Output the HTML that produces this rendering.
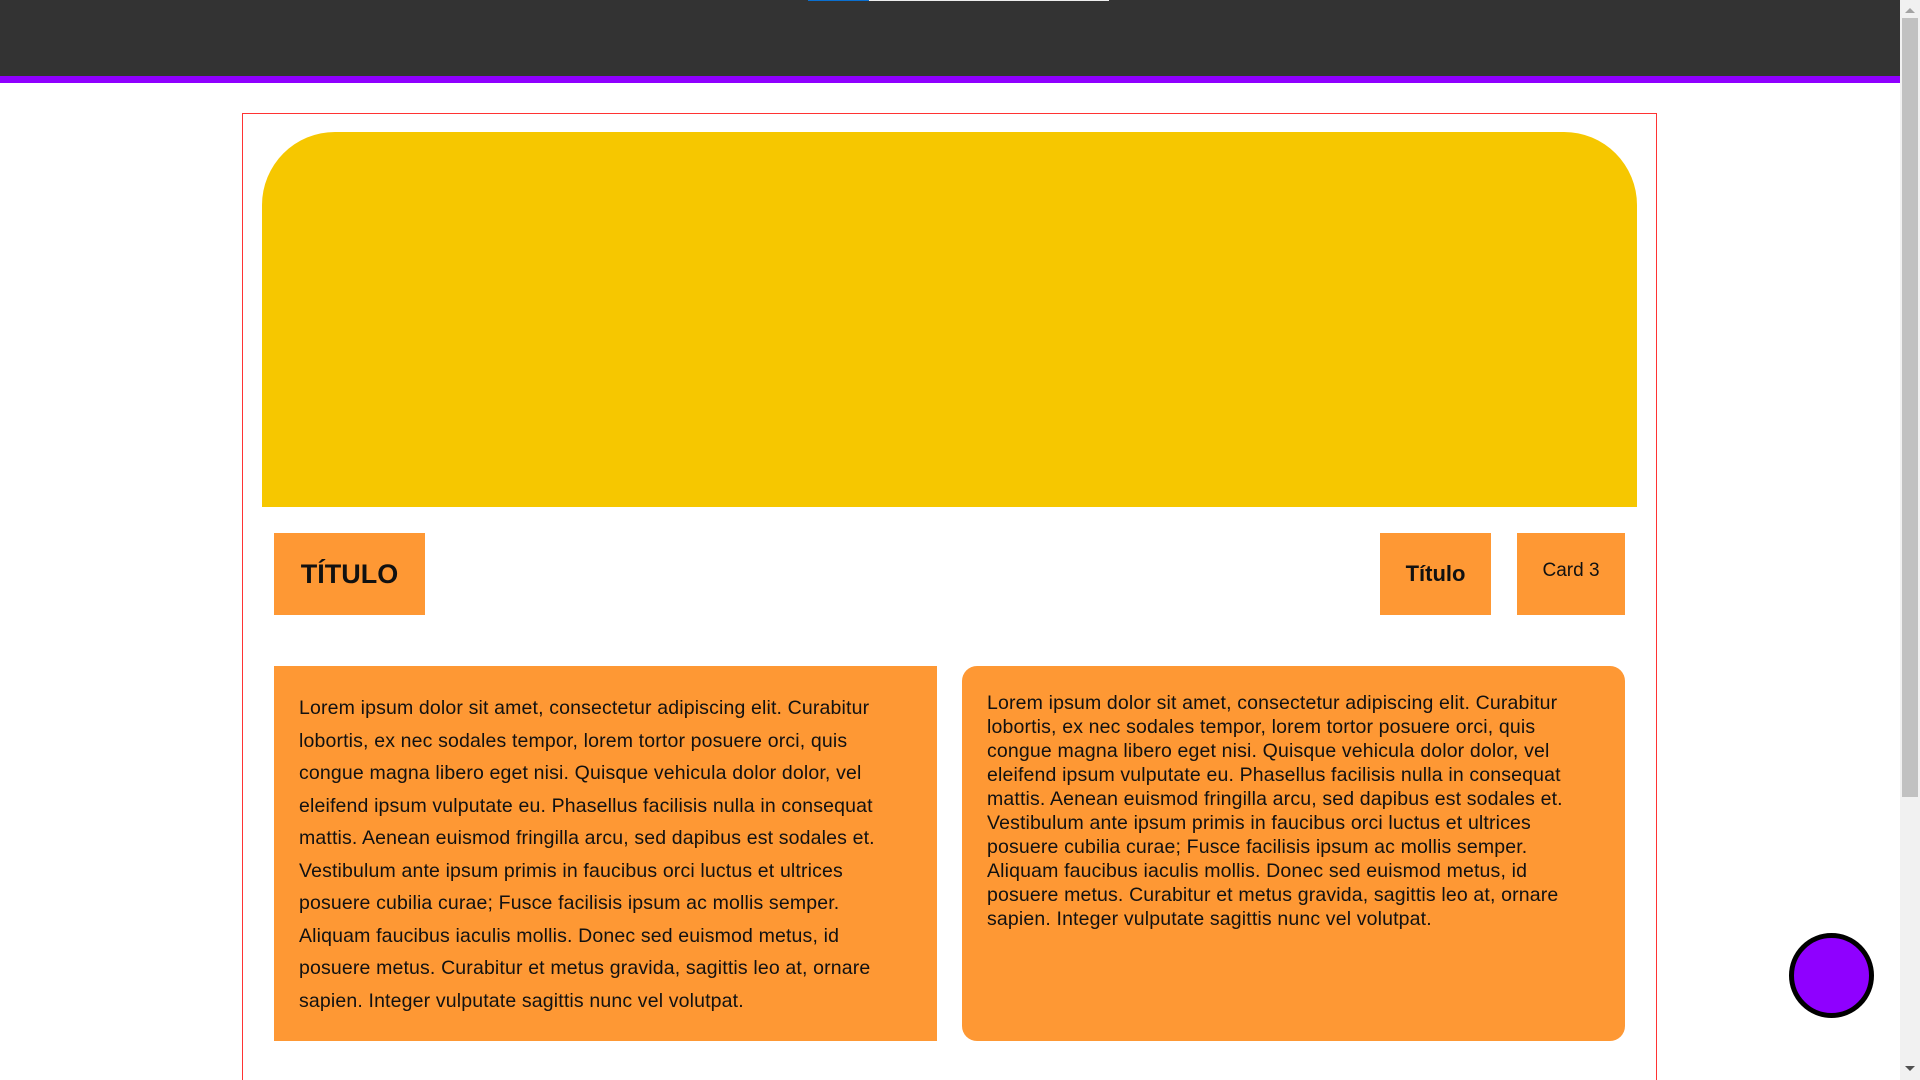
<!DOCTYPE html>
<html><head><meta charset="utf-8"><style>
*{margin:0;padding:0;box-sizing:border-box}
html,body{width:1920px;height:1080px;overflow:hidden;background:#fff;font-family:"Liberation Sans",sans-serif;color:#111}
.hdr{position:absolute;left:0;top:0;width:1900px;height:76px;background:#333}
.pb{position:absolute;left:0;top:76px;width:1900px;height:7px;background:#8f00ff}
.tb1{position:absolute;left:808px;top:0;width:61px;height:1px;background:#0a6fd0}
.tb2{position:absolute;left:869px;top:0;width:240px;height:1px;background:#eee}
.wrap{position:absolute;left:242px;top:113px;width:1415px;height:967px;border:1px solid #f33;border-bottom:none}
.yel{position:absolute;left:262px;top:132px;width:1375px;height:375px;background:#f6c700;border-radius:73px 73px 0 0}
.box{position:absolute;background:#fe9834;display:flex;align-items:center;justify-content:center;font-weight:bold}
.card{position:absolute;top:666px;height:375px;background:#fe9834;font-size:19.5px;letter-spacing:0.15px;font-weight:300}
.scroll{position:absolute;left:1900px;top:0;width:20px;height:1080px;background:#f1f1f1}
.thumb{position:absolute;left:1902px;top:18px;width:16px;height:779px;background:#c1c1c1}
.circ{position:absolute;left:1789px;top:933px;width:85px;height:85px;border-radius:50%;background:#8f00ff;border:5px solid #000}
</style></head><body>
<div class="hdr"></div><div class="pb"></div><div class="tb1"></div><div class="tb2"></div>
<div class="wrap"></div>
<div class="yel"></div>
<div class="box" style="left:274px;top:533px;width:151px;height:82px;font-size:27px">TÍTULO</div>
<div class="box" style="left:1380px;top:533px;width:111px;height:82px;font-size:22px">Título</div>
<div class="box" style="left:1517px;top:533px;width:108px;height:82px;font-size:19px;font-weight:normal;padding-bottom:6px">Card 3</div>
<div class="card" style="left:274px;width:663px;padding:26px 25px;line-height:32.5px">Lorem ipsum dolor sit amet, consectetur adipiscing elit. Curabitur lobortis, ex nec sodales tempor, lorem tortor posuere orci, quis congue magna libero eget nisi. Quisque vehicula dolor dolor, vel eleifend ipsum vulputate eu. Phasellus facilisis nulla in consequat mattis. Aenean euismod fringilla arcu, sed dapibus est sodales et. Vestibulum ante ipsum primis in faucibus orci luctus et ultrices posuere cubilia curae; Fusce facilisis ipsum ac mollis semper. Aliquam faucibus iaculis mollis. Donec sed euismod metus, id posuere metus. Curabitur et metus gravida, sagittis leo at, ornare sapien. Integer vulputate sagittis nunc vel volutpat.</div>
<div class="card" style="left:962px;width:663px;padding:25px 25px;line-height:24px;border-radius:15px">Lorem ipsum dolor sit amet, consectetur adipiscing elit. Curabitur lobortis, ex nec sodales tempor, lorem tortor posuere orci, quis congue magna libero eget nisi. Quisque vehicula dolor dolor, vel eleifend ipsum vulputate eu. Phasellus facilisis nulla in consequat mattis. Aenean euismod fringilla arcu, sed dapibus est sodales et. Vestibulum ante ipsum primis in faucibus orci luctus et ultrices posuere cubilia curae; Fusce facilisis ipsum ac mollis semper. Aliquam faucibus iaculis mollis. Donec sed euismod metus, id posuere metus. Curabitur et metus gravida, sagittis leo at, ornare sapien. Integer vulputate sagittis nunc vel volutpat.</div>
<div class="circ"></div>
<div class="scroll"></div><div class="thumb"></div>
<div style="position:absolute;left:1905px;top:1066px;width:0;height:0;border-left:5px solid transparent;border-right:5px solid transparent;border-top:5px solid #505050"></div>
<div style="position:absolute;left:1905px;top:8px;width:0;height:0;border-left:5px solid transparent;border-right:5px solid transparent;border-bottom:5px solid #a3a3a3"></div>
</body></html>
